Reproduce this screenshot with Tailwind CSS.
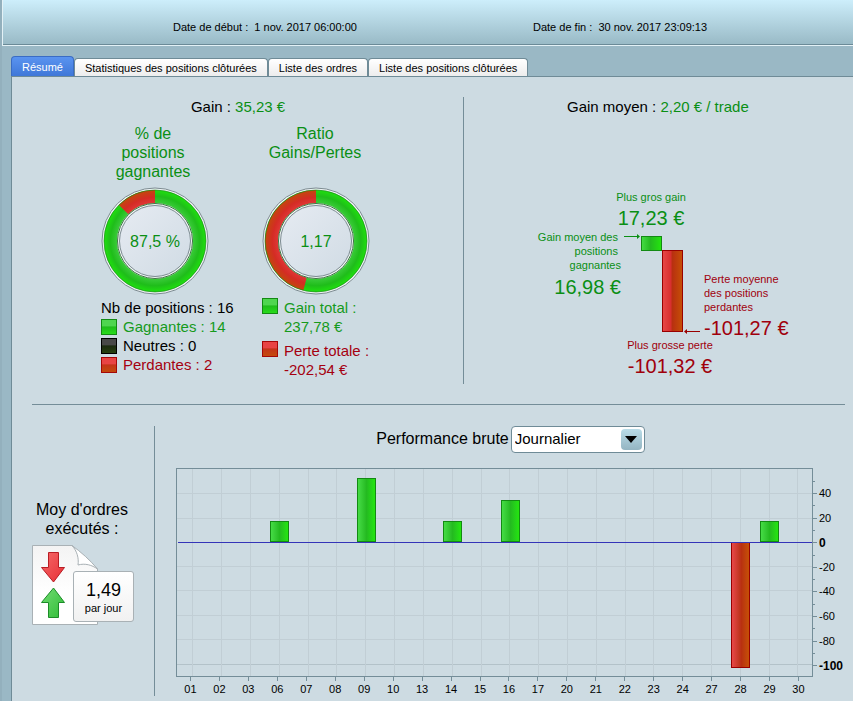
<!DOCTYPE html>
<html lang="fr">
<head>
    <meta charset="UTF-8">
    <meta name="viewport" content="width=device-width, initial-scale=1.0">
    <title>Rapport détaillé</title>
    <script src="https://cdn.jsdelivr.net/npm/@tailwindcss/browser@4"></script>
</head>

<body class="min-h-screen flex flex-col bg-[#9ab8c5] border-l-2 border-[#93b0bd] text-black text-[11px] font-['Liberation_Sans',Arial,sans-serif]">

    <!-- Header -->
    <header class="h-[46px] flex pl-[170px] pt-[19px] border-l border-b border-[#e3f1f6] bg-linear-to-b from-[#cdeefb] to-[#98b9c5] shadow-[inset_0_-1px_0_#6b8a97]">
        <p class="w-[360px] leading-4 whitespace-pre">Date de début :  1 nov. 2017 06:00:00</p>
        <p class="leading-4 whitespace-pre">Date de fin :  30 nov. 2017 23:09:13</p>
    </header>

    <!-- Tabs -->
    <nav class="flex items-end pl-[9px] pt-[10px] leading-4">
        <button class="h-5 px-[10px] rounded-t border border-b-0 border-[#3a6cc4] bg-linear-to-b from-[#5a94f0] to-[#3f77d8] text-white">Résumé</button>
        <button class="h-[18px] px-[10px] rounded-t border border-b-0 border-[#6f8b97] bg-linear-to-b from-white to-[#ededed]">Statistiques des positions clôturées</button>
        <button class="h-[18px] px-[10px] rounded-t border border-b-0 border-[#6f8b97] bg-linear-to-b from-white to-[#ededed]">Liste des ordres</button>
        <button class="h-[18px] px-[10px] rounded-t border border-b-0 border-[#6f8b97] bg-linear-to-b from-white to-[#ededed]">Liste des positions clôturées</button>
    </nav>

    <main class="grow ml-[9px] border-l border-t border-[#6f8b97] bg-[#cddbe2]">

        <div class="flex pt-5">
            <!-- Gains -->
            <section class="w-[452px] h-[287px] border-r border-[#748d98] pl-[81px] text-[15px] leading-[19px]">
                <h2 class="w-[290px] text-center">Gain : <span class="text-[#0a8f14]">35,23 €</span></h2>
                <div class="flex pt-2">
                    <div class="w-[161px]">
                        <h3 class="w-[120px] h-[57px] text-center text-base leading-[19px] text-[#0a8f14]">% de<br>positions<br>gagnantes</h3>
                        <svg class="mt-[5px] ml-[7px]" width="110" height="110" viewBox="0 0 110 110">
                            <defs>
                                <radialGradient id="green-ring" gradientUnits="userSpaceOnUse" cx="55" cy="55" r="52">
                                    <stop offset=".72" stop-color="#3dcc3d"/>
                                    <stop offset=".86" stop-color="#1fbd1a"/>
                                    <stop offset="1" stop-color="#1fe60c"/>
                                </radialGradient>
                                <radialGradient id="red-ring" gradientUnits="userSpaceOnUse" cx="55" cy="55" r="52">
                                    <stop offset=".72" stop-color="#e03838"/>
                                    <stop offset=".84" stop-color="#d42c24"/>
                                    <stop offset="1" stop-color="#c04c0a"/>
                                </radialGradient>
                                <linearGradient id="disc" x1="0" y1="0" x2="1" y2="1">
                                    <stop offset="0" stop-color="#e6ebf2"/>
                                    <stop offset="1" stop-color="#d0dbe4"/>
                                </linearGradient>
                            </defs>
                            <circle cx="55" cy="55" r="53" fill="#f1f5f6" stroke="#7b8a90"/>
                            <circle cx="55" cy="55" r="44.500" fill="none" stroke="url(#green-ring)" stroke-width="13"/>
                            <path d="M55 10.500A44.500 44.500 0 0 0 23.500 23.500" fill="none" stroke="url(#red-ring)" stroke-width="13"/>
                            <circle cx="55" cy="55" r="51" fill="none" stroke="#168016" stroke-opacity=".6"/>
                            <circle cx="55" cy="55" r="37.500" fill="#f1f5f6" stroke="#3c7440"/>
                            <circle cx="55" cy="55" r="35.500" fill="url(#disc)" stroke="#7b8a90"/>
                            <text x="55" y="61" text-anchor="middle" font-size="16" fill="#0a8f14">87,5 %</text>
                        </svg>
                    </div>
                    <div class="w-[161px]">
                        <h3 class="w-[122px] h-[57px] text-center text-base leading-[19px] text-[#0a8f14]">Ratio<br>Gains/Pertes</h3>
                        <svg class="mt-[5px] ml-[7px]" width="110" height="110" viewBox="0 0 110 110">
                            <circle cx="55" cy="55" r="53" fill="#f1f5f6" stroke="#7b8a90"/>
                            <circle cx="55" cy="55" r="44.500" fill="none" stroke="url(#green-ring)" stroke-width="13"/>
                            <path d="M55 10.500A44.500 44.500 0 0 0 44 98.100" fill="none" stroke="url(#red-ring)" stroke-width="13"/>
                            <circle cx="55" cy="55" r="51" fill="none" stroke="#168016" stroke-opacity=".6"/>
                            <circle cx="55" cy="55" r="37.500" fill="#f1f5f6" stroke="#3c7440"/>
                            <circle cx="55" cy="55" r="35.500" fill="url(#disc)" stroke="#7b8a90"/>
                            <text x="55" y="61" text-anchor="middle" font-size="16" fill="#0a8f14">1,17</text>
                        </svg>
                    </div>
                </div>
                <div class="flex pt-[2px] pl-2">
                    <ul class="w-[161px]">
                        <li>Nb de positions : 16</li>
                        <li class="flex items-center gap-[6px] text-[#169a1c]"><span class="size-4 border border-[#138a13] bg-linear-to-b from-[#4fd64f] from-40% via-[#1fbd1a] via-50% to-[#28dc1c]"></span>Gagnantes : 14</li>
                        <li class="flex items-center gap-[6px]"><span class="size-4 border border-black bg-linear-to-b from-[#484848] from-40% via-[#1c2a10] via-50% to-[#26400e]"></span>Neutres : 0</li>
                        <li class="flex items-center gap-[6px] text-[#a50010]"><span class="size-4 border border-[#a50808] bg-linear-to-b from-[#e84444] from-40% via-[#c43418] via-50% to-[#c44a0c]"></span>Perdantes : 2</li>
                    </ul>
                    <ul class="flex flex-col gap-[5px]">
                        <li class="flex gap-[6px] text-[#169a1c]"><span class="size-4 border border-[#138a13] bg-linear-to-b from-[#4fd64f] from-40% via-[#1fbd1a] via-50% to-[#28dc1c]"></span><span>Gain total :<br>237,78 €</span></li>
                        <li class="flex gap-[6px] text-[#a50010]"><span class="size-4 border border-[#a50808] bg-linear-to-b from-[#e84444] from-40% via-[#c43418] via-50% to-[#c44a0c]"></span><span>Perte totale :<br>-202,54 €</span></li>
                    </ul>
                </div>
            </section>

            <!-- Gain moyen -->
            <section class="grow pl-[72px] leading-[14px] text-[#0a8f14]">
                <h2 class="pl-[31px] text-[15px] leading-[19px] text-black">Gain moyen : <span class="text-[#0a8f14]">2,20 € / trade</span></h2>
                <div class="w-[230px] pt-[74px] text-center">
                    <p>Plus gros gain</p>
                    <p class="pt-1 text-xl leading-5">17,23 €</p>
                </div>
                <div class="flex pt-[2px]">
                    <div class="w-[85px] text-right whitespace-nowrap">
                        <p>Gain moyen des&nbsp;<br>positions&nbsp;<br>gagnantes</p>
                        <p class="pt-[5px] text-xl leading-5">16,98 €</p>
                    </div>
                    <svg width="83" height="104" viewBox="0 0 83 104">
                        <defs>
                            <linearGradient id="green-bar">
                                <stop offset="0" stop-color="#45dc45"/>
                                <stop offset=".45" stop-color="#24ba20"/>
                                <stop offset="1" stop-color="#24e60e"/>
                            </linearGradient>
                            <linearGradient id="red-bar">
                                <stop offset="0" stop-color="#e84848"/>
                                <stop offset=".4" stop-color="#d83030"/>
                                <stop offset=".5" stop-color="#b83010"/>
                                <stop offset="1" stop-color="#c65006"/>
                            </linearGradient>
                        </defs>
                        <path d="M3 6.500H17" stroke="#0a8f14"/>
                        <path d="M16 4L19 6.500L16 9Z" fill="#0a8f14"/>
                        <rect x="20.500" y="6.500" width="20" height="14" fill="url(#green-bar)" stroke="#138a13"/>
                        <rect x="41.500" y="20.500" width="20" height="81" fill="url(#red-bar)" stroke="#900"/>
                        <path d="M65 101.500H79" stroke="#900"/>
                        <path d="M66 99L63 101.500L66 104Z" fill="#900"/>
                    </svg>
                    <div class="pt-[42px] text-[#a0000c]">
                        <p>Perte moyenne<br>des positions<br>perdantes</p>
                        <p class="pt-1 text-xl leading-5">-101,27 €</p>
                    </div>
                </div>
                <div class="w-[268px] text-center text-[#a0000c]">
                    <p>Plus grosse perte</p>
                    <p class="pt-1 text-xl leading-5">-101,32 €</p>
                </div>
            </section>
        </div>

        <hr class="mt-5 ml-5 mr-2 border-[#748d98]">

        <div class="flex pt-[21px] pl-5">
            <!-- Ordres par jour -->
            <section class="w-[123px] h-[270px] shrink-0 border-r border-[#748d98] pt-[74px]">
                <h2 class="w-[100px] text-center text-base leading-[19px]">Moy d'ordres exécutés :</h2>
                <div class="relative mt-[7px]">
                    <svg width="68" height="80" viewBox="0 0 68 80">
                        <defs>
                            <linearGradient id="page" x1="0" y1="0" x2="0" y2="1">
                                <stop offset="0" stop-color="#f3f3f3"/>
                                <stop offset=".6" stop-color="#fff"/>
                            </linearGradient>
                            <linearGradient id="arrow-down" x1="0" y1="0" x2="1" y2="1">
                                <stop offset="0" stop-color="#f46a6a"/>
                                <stop offset="1" stop-color="#e82e34"/>
                            </linearGradient>
                            <linearGradient id="arrow-up" x1="0" y1="0" x2="1" y2="1">
                                <stop offset="0" stop-color="#74dc74"/>
                                <stop offset="1" stop-color="#2ebc36"/>
                            </linearGradient>
                        </defs>
                        <path d="M.5 .5H40L65.500 24V79.500H.5Z" fill="url(#page)" stroke="#a9b1b5"/>
                        <path d="M40 .5C45 6 47 13 46 20C53 18 60 20 65.500 24C58 15 49 7 40 .5Z" fill="#fff" stroke="#a9b1b5"/>
                        <path d="M16.500 7.500H26.500V22.500H32.500L21.500 37L9.500 22.500H16.500Z" fill="url(#arrow-down)" stroke="#b81c24" stroke-linejoin="round"/>
                        <path d="M16.500 72.500H26.500V57.500H32.500L21.500 43L9.500 57.500H16.500Z" fill="url(#arrow-up)" stroke="#1c8c28" stroke-linejoin="round"/>
                    </svg>
                    <div class="absolute left-[41px] top-[26px] w-[61px] h-[51px] pt-2 rounded-[3px] border border-[#a9b1b5] bg-linear-to-b from-white to-[#f1f1f1] text-center">
                        <p class="text-lg leading-5">1,49</p>
                        <p class="leading-4">par jour</p>
                    </div>
                </div>
            </section>

            <!-- Performance brute -->
            <section class="grow pl-[21px]">
                <div class="h-[42px] flex items-start justify-center pr-2">
                    <label for="period" class="pr-[2px] text-base leading-[26px]">Performance brute</label>
                    <div class="relative">
                        <select id="period" class="block appearance-none w-[134px] h-[27px] pl-[3px] rounded border border-[#6f8b97] bg-white text-[15px]">
                            <option>Journalier</option>
                            <option>Hebdomadaire</option>
                            <option>Mensuel</option>
                        </select>
                        <span class="absolute right-[3px] top-[3px] size-[21px] flex items-center justify-center rounded-sm bg-linear-to-b from-[#b9dce8] to-[#94b5c2] pointer-events-none">
                            <svg width="12" height="7" viewBox="0 0 12 7"><path d="M0 0H12L6 7Z"/></svg>
                        </span>
                    </div>
                </div>
                <div class="flex">
                    <div class="grow">
                        <div class="relative h-[209px] border border-[#748d98]">
                            <div class="absolute inset-0 flex flex-col pb-[11px]">
                                <div class="h-[25px] border-b border-[#c1ced5]"></div>
                                <div class="flex-1 border-b border-[#c1ced5]"></div>
                                <div class="flex-1"></div>
                                <div class="flex-1 border-b border-[#c1ced5]"></div>
                                <div class="flex-1 border-b border-[#c1ced5]"></div>
                                <div class="flex-1 border-b border-[#c1ced5]"></div>
                                <div class="flex-1 border-b border-[#c1ced5]"></div>
                                <div class="flex-1 border-b border-[#b3c2c9]"></div>
                            </div>
                            <div id="bars" class="relative flex h-full pl-px"></div>
                        </div>
                        <div id="days" class="flex"></div>
                    </div>
                    <div id="scale" class="w-10 h-[209px] shrink-0 flex flex-col pt-[7px] pb-[5px] leading-none"></div>
                </div>
            </section>
        </div>
    </main>

    <script>
        // Daily results in euros
        const days = [
            ['01', 0], ['02', 0], ['03', 0], ['06', 17], ['07', 0], ['08', 0], ['09', 52], ['10', 0],
            ['13', 0], ['14', 17], ['15', 0], ['16', 34], ['17', 0], ['20', 0], ['21', 0], ['22', 0],
            ['23', 0], ['24', 0], ['27', 0], ['28', -101.5], ['29', 17], ['30', 0]
        ];
        const pxPerEuro = 1.23;

        document.getElementById('bars').innerHTML = days.map(([day, value]) => {
            const height = Math.round(Math.abs(value) * pxPerEuro);
            const gain = value > 0 ? `<div class="relative w-[19px] border border-[#138a13] bg-linear-to-r from-[#45dc45] via-[#24ba20] to-[#24e60e]" style="height: ${height}px"></div>` : '';
            const loss = value < 0 ? `<div class="relative w-[19px] border border-t-0 border-[#990000] bg-linear-to-r from-[#e84848] from-0% via-[#b83010] via-55% to-[#c65006]" style="height: ${height}px"></div>` : '';
            return `
                <div class="relative flex-1 flex flex-col">
                    <div class="absolute inset-y-0 left-1/2 border-l border-[#c1ced5]"></div>
                    <div class="h-[73px] flex items-end justify-center pl-[2px]">${gain}</div>
                    <div class="relative grow flex items-start justify-center pl-[2px] border-t border-[#3434b8]">${loss}</div>
                </div>
            `;
        }).join('');

        document.getElementById('days').innerHTML = days.map(([day]) => `
            <div class="flex-1 flex flex-col items-center">
                <span class="h-1 border-l border-[#748d98]"></span>
                <span class="leading-4">${day}</span>
            </div>
        `).join('');

        // A tick every 10, a label every 20
        let scale = '';
        for (let v = 50; v >= -100; v -= 10) {
            const bold = v % 100 === 0 ? 'text-xs leading-none font-bold' : '';
            scale += v % 20 === 0
                ? `<div class="flex-1 min-h-0 flex items-center gap-[2px]"><span class="w-1 border-t border-[#748d98]"></span><span class="${bold}">${v}</span></div>`
                : '<div class="flex-1 min-h-0 flex items-center"><span class="w-[2px] border-t border-[#748d98]"></span></div>';
        }
        document.getElementById('scale').innerHTML = scale;
    </script>
</body>
</html>
